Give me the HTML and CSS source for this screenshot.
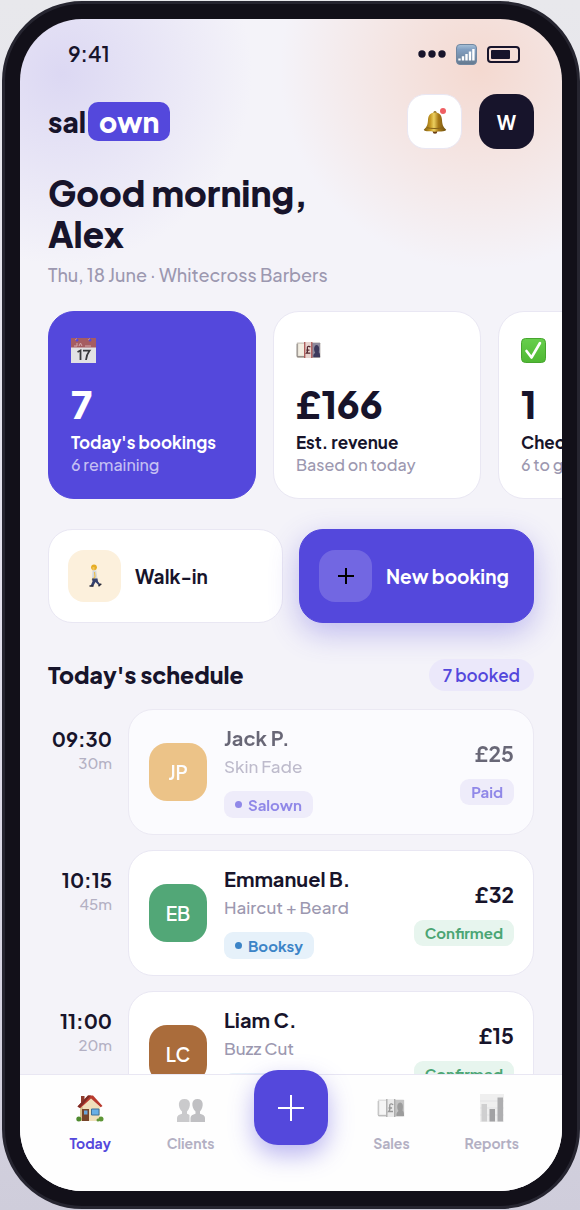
FILE: index.html
```html
<!DOCTYPE html>
<html lang="en">
<head>
<meta charset="utf-8">
<meta name="viewport" content="width=device-width, initial-scale=1">
<title>Salown – Today</title>
<link rel="stylesheet" href="styles.css">
</head>
<body>
<svg class="defs" aria-hidden="true">
  <symbol id="banknote" viewBox="0 0 28 20">
    <path d="M1 1.500h25.500l.8 1v16L26 19H2L.8 17.500z" fill="#c9c3bb"/>
    <path d="M2.500 3h7v13.500h-7z" fill="#f3eee2"/>
    <path d="M1 17.500h26M1.200 3v14" stroke="#827c78" stroke-width="1" fill="none"/>
    <path d="M18 2h9v16h-9z" fill="#8d8a9d"/>
    <path d="M19.500 18c-.5-3 1-4 2-5-2-3-1.500-8 1.500-8.500 3 .2 3.500 4 2.500 8 1 1 1.500 2 1.500 5.500z" fill="#3c395c"/>
    <path d="M9.500 1h8.500v18H9.500z" fill="#e7d4cf"/>
    <path d="M9.800 1v18M17.700 1v18" stroke="#a54646" stroke-width="1.300"/>
    <path d="M16 7c-.8-1.800-3.600-1.300-3.300.8.2 1.600.8 4-.9 5.700H16M11.500 10h3.600" stroke="#54282f" stroke-width="1.400" fill="none"/>
  </symbol>
</svg>
<div class="phone">
  <div class="screen">
    <main class="content">
      <div class="status">
        <span class="clock">9:41</span>
        <div class="status-icons">
          <svg class="dots" viewBox="0 0 28 8" aria-hidden="true"><circle cx="4" cy="4" r="3.700"/><circle cx="14" cy="4" r="3.700"/><circle cx="24" cy="4" r="3.700"/></svg>
          <svg class="signal" viewBox="0 0 21 21" aria-hidden="true">
            <defs><linearGradient id="sig" x1="0" y1="0" x2="0" y2="1"><stop offset="0" stop-color="#a9c2d8"/><stop offset=".25" stop-color="#83a0c2"/><stop offset="1" stop-color="#64798f"/></linearGradient></defs>
            <rect x=".5" y=".5" width="20" height="20" rx="3.500" fill="url(#sig)" stroke="#7187a0"/>
            <path d="M3.500 16.500v-2M7 16.500v-4.200M10.500 16.500v-6.500M14 16.500V7.500M17.400 16.500V5" stroke="#fff" stroke-width="2.400"/>
          </svg>
          <span class="battery"><span class="battery-level"></span></span>
        </div>
      </div>

      <header class="topbar">
        <div class="logo">sal<span class="logo-tag">own</span></div>
        <div class="topbar-actions">
          <button class="square-btn bell" aria-label="Notifications">
            <svg viewBox="0 0 24 24" width="24" height="24" aria-hidden="true">
              <defs><linearGradient id="brass" x1="0" x2="1" y1="0" y2="0"><stop offset="0" stop-color="#7c5a10"/><stop offset=".3" stop-color="#c99c26"/><stop offset=".45" stop-color="#ecd060"/><stop offset=".65" stop-color="#a87a18"/><stop offset="1" stop-color="#6e5010"/></linearGradient></defs>
              <circle cx="12" cy="21.500" r="2.300" fill="#6b3d15"/>
              <circle cx="12" cy="2.600" r="1.600" fill="#8a6a1c"/>
              <path d="M12 2.600c4.700 0 6.700 2.900 7 7.400.3 4 .6 6.500 4.200 9.800.4 1.300-5 1.900-11.200 1.900S.4 21.100.8 19.800C4.400 16.500 4.700 14 5 10c.3-4.500 2.300-7.400 7-7.400z" fill="url(#brass)"/>
              <path d="M4 17.700c4 1.100 12 1.100 16 0" stroke="#86621a" fill="none"/>
            </svg>
            <span class="bell-dot"></span>
          </button>
          <button class="square-btn account" aria-label="Account">W</button>
        </div>
      </header>

      <h1 class="greeting">Good morning,<br>Alex</h1>
      <p class="subtitle">Thu, 18 June · Whitecross Barbers</p>

      <section class="stats" aria-label="Summary">
        <article class="stat stat-primary">
          <div class="stat-icon">
            <svg viewBox="0 0 25 25" width="25" height="25" aria-hidden="true">
              <rect width="25" height="25" fill="#e2e1e4"/><rect width="25" height="9.500" fill="#a55c62"/>
              <path d="M3 8h3V5M8 8l1.500-3L11 8M14 8h6" stroke="#d2a7aa" fill="none"/>
              <circle cx="6" cy="2" r="1.500" fill="#5548dc"/><circle cx="19" cy="2" r="1.500" fill="#5548dc"/>
              <path d="M4 2l2-1.500M17 2l2-1.500" stroke="#c58f95"/>
              <path d="M6.500 14l3-1.500V22M12 12.700h6.500c-2 2.500-3 5-3.500 9.300" stroke="#3a3a3d" stroke-width="1.800" fill="none"/>
            </svg>
          </div>
          <strong class="stat-value">7</strong>
          <span class="stat-label">Today's bookings</span>
          <span class="stat-note">6 remaining</span>
        </article>
        <article class="stat">
          <div class="stat-icon"><svg width="25" height="18" aria-hidden="true"><use href="#banknote"/></svg></div>
          <strong class="stat-value">£166</strong>
          <span class="stat-label">Est. revenue</span>
          <span class="stat-note">Based on today</span>
        </article>
        <article class="stat">
          <div class="stat-icon">
            <svg viewBox="0 0 25 25" width="25" height="25" aria-hidden="true">
              <defs><linearGradient id="ok" x1="0" y1="0" x2="0" y2="1"><stop offset="0" stop-color="#67cf4c"/><stop offset="1" stop-color="#4fb833"/></linearGradient></defs>
              <rect x=".5" y=".5" width="24" height="24" rx="4" fill="url(#ok)" stroke="#47a52f"/>
              <path d="M5.500 13l5 6.500L19 5" stroke="#fff" stroke-width="2.600" fill="none" stroke-linecap="round" stroke-linejoin="round"/>
            </svg>
          </div>
          <strong class="stat-value">1</strong>
          <span class="stat-label">Checked out</span>
          <span class="stat-note">6 to go</span>
        </article>
      </section>

      <div class="actions">
        <button class="action">
          <span class="action-icon action-icon-warm">
            <svg viewBox="0 0 14 24" width="14" height="24" aria-hidden="true">
              <circle cx="6" cy="3.300" r="2.900" fill="#e6ad24"/><path d="M4.500 3h2v3.500h-2z" fill="#f1c45b"/>
              <path d="M4.500 6.500h3.800l1.200 8.500H4z" fill="#d3d8df"/>
              <path d="M6.500 8l.5 5-3 3" stroke="#eebf4a" stroke-width="1.200" fill="none"/>
              <path d="M4 14.500h5.500l.5 3 2.500 3-1 1.500-4-4-2.500 4.500-2.500-.5 2-4.500z" fill="#34406c"/>
              <path d="M1.500 22h4M10.500 22.300l2.800-2.500" stroke="#292a38" stroke-width="1.500"/>
            </svg>
          </span>
          Walk-in
        </button>
        <button class="action action-primary">
          <span class="action-icon">
            <svg viewBox="0 0 16 16" width="16" height="16" aria-hidden="true"><path d="M8 0v16M0 8h16" stroke="#000" stroke-width="2"/></svg>
          </span>
          New booking
        </button>
      </div>

      <div class="section-head">
        <h2 class="section-title">Today's schedule</h2>
        <span class="count">7 booked</span>
      </div>

      <ol class="schedule">
        <li class="slot">
          <div class="when"><time class="when-time">09:30</time><span class="when-length">30m</span></div>
          <article class="booking booking-done">
            <span class="avatar avatar-amber">JP</span>
            <div class="client">
              <h3 class="client-name">Jack P.</h3>
              <p class="service">Skin Fade</p>
              <span class="source source-salown">Salown</span>
            </div>
            <div class="payment"><span class="price">£25</span><span class="badge badge-paid">Paid</span></div>
          </article>
        </li>
        <li class="slot">
          <div class="when"><time class="when-time">10:15</time><span class="when-length">45m</span></div>
          <article class="booking">
            <span class="avatar avatar-green">EB</span>
            <div class="client">
              <h3 class="client-name">Emmanuel B.</h3>
              <p class="service">Haircut + Beard</p>
              <span class="source source-booksy">Booksy</span>
            </div>
            <div class="payment"><span class="price">£32</span><span class="badge badge-ok">Confirmed</span></div>
          </article>
        </li>
        <li class="slot">
          <div class="when"><time class="when-time">11:00</time><span class="when-length">20m</span></div>
          <article class="booking">
            <span class="avatar avatar-brown">LC</span>
            <div class="client">
              <h3 class="client-name">Liam C.</h3>
              <p class="service">Buzz Cut</p>
              <span class="source source-booksy">Booksy</span>
            </div>
            <div class="payment"><span class="price">£15</span><span class="badge badge-ok">Confirmed</span></div>
          </article>
        </li>
      </ol>
    </main>

    <nav class="tabs" aria-label="Main">
      <a class="tab tab-active" href="#today">
        <svg viewBox="0 0 28 28" width="28" height="28" aria-hidden="true">
          <path d="M5 2h3.500v7H5z" fill="#8f3b2c"/>
          <path d="M4 13L14.500 4 24 13v14H4z" fill="#f0dfba"/>
          <path d="M4 13h3v14H4z" fill="#d9c493"/>
          <path d="M1.500 12.500L12 1.500h5L26.500 12l-1.800 1.200L15 4.500 4.500 14z" fill="#b93a2d"/>
          <path d="M1.500 12.500L12 1.500h3L3.500 14z" fill="#7e2c25"/>
          <path d="M6 15h7v12H6z" fill="#77452a"/><path d="M8 16.500h3.500v4H8z" fill="#6aa5d9"/>
          <path d="M15.500 15h7.500v6h-7.500z" fill="#68afe5" stroke="#3e7199"/>
          <circle cx="2.800" cy="25" r="2.500" fill="#4f8a2f"/><circle cx="25" cy="25" r="2.500" fill="#5e9636"/><circle cx="22" cy="26" r="1.500" fill="#5e9636"/>
        </svg>
        Today
      </a>
      <a class="tab" href="#clients">
        <svg viewBox="0 0 28 28" width="28" height="28" aria-hidden="true">
          <path d="M0 28v-4c0-2.500 2-3.200 5-4.200v-2.300C.5 13 .5 5 7.500 5S14 13 10 17.500v2.300c1 .4 1.600.7 2.500 1.200V28z" fill="#cacacc"/>
          <path d="M13.500 28v-4c0-2.500 2-3.200 5-4.200v-2.300C14 13 14 5 20.500 5S27 13 23 17.500v2.300c3 1 5 1.700 5 4.200v4z" fill="#c0c0c3"/>
        </svg>
        Clients
      </a>
      <button class="fab" aria-label="Add">
        <svg viewBox="0 0 26 26" width="26" height="26" aria-hidden="true"><path d="M13 0v26M0 13h26" stroke="#fff" stroke-width="2"/></svg>
      </button>
      <a class="tab" href="#sales">
        <svg class="muted-icon" width="28" height="28" aria-hidden="true"><use href="#banknote"/></svg>
        Sales
      </a>
      <a class="tab" href="#reports">
        <svg viewBox="0 0 28 28" width="28" height="28" aria-hidden="true">
          <path d="M2 0h24v28H2z" fill="#efefef"/><path d="M2 7h24M2 14h24M2 21h24" stroke="#e3e3e5"/>
          <path d="M3.500 10H9v17.500H3.500z" fill="#cfcfd0"/><path d="M11.500 15H17v12.500h-5.500z" fill="#a2a2a4"/><path d="M19.500 3.500H25v24h-5.500z" fill="#aeaeb0"/>
        </svg>
        Reports
      </a>
    </nav>
  </div>
</div>
</body>
</html>
```
FILE: styles.css
```css
:root {
  --ink: #17142b;
  --muted: #9c98b0;
  --faint: #b3b0c3;
  --accent: #5448dc;
  --tint: #ebe8fa;
  --line: #e9e7f3;
  --page: #f4f3f9;
}

* { box-sizing: border-box; }

body {
  margin: 0;
  padding: 1px 0 1px 2px;
  background: linear-gradient(180deg, #e8e8ec 0%, #e2e0ec 50%, #cfcddb 100%);
  color: var(--ink);
  font-family: "Plus Jakarta Sans", Inter, sans-serif;
}

h1, h2, h3, p, ol { margin: 0; padding: 0; }
button { border: 0; padding: 0; font: inherit; color: inherit; cursor: pointer; }
svg { display: block; }
.defs { display: none; }

.phone {
  height: calc(100vh - 2px);
  padding: 15px;
  border: 3px solid #262530;
  border-radius: 80px;
  background: #121019;
}

.screen {
  display: flex;
  flex-direction: column;
  height: 100%;
  overflow: hidden;
  border-radius: 62px;
  background:
    radial-gradient(circle at 42px 55px, #dcd8f3 0, #dcd8f300 190px),
    radial-gradient(circle at calc(100% - 82px) 50px, #f4d9d0 0, #f4d9d000 200px),
    var(--page);
}

.content {
  flex: 1;
  min-height: 0;
  padding: 0 28px;
  overflow: hidden auto;
  scrollbar-width: none;
}

/* Status bar */
.status {
  display: flex;
  align-items: center;
  justify-content: space-between;
  padding: 20px 14px 25px 20px;
}
.clock { font-size: 21px; line-height: 30px; font-weight: 600; }
.status-icons { display: flex; align-items: center; gap: 10px; }
.dots { width: 28px; height: 8px; fill: var(--ink); }
.signal { width: 21px; height: 21px; }
.battery {
  width: 33px;
  height: 17px;
  padding: 2px;
  border: 2px solid var(--ink);
  border-radius: 4px;
}
.battery-level { display: block; width: 19px; height: 9px; border-radius: 1px; background: var(--ink); }

/* Top bar */
.topbar { display: flex; align-items: center; justify-content: space-between; }
.logo { display: flex; align-items: center; gap: 2px; font-size: 28px; line-height: 39px; font-weight: 800; }
.logo-tag { padding: 0 11px; border-radius: 10px; background: var(--accent); color: #fff; }
.topbar-actions { display: flex; gap: 17px; }
.square-btn {
  display: grid;
  place-items: center;
  width: 55px;
  height: 55px;
  border-radius: 18px;
  font-size: 19px;
  font-weight: 700;
}
.bell { position: relative; border: 1px solid var(--line); background: #fff; }
.bell-dot { position: absolute; top: 13px; right: 15px; width: 6px; height: 6px; border-radius: 3px; background: #ef5f63; }
.account { background: var(--ink); color: #fff; }

.greeting { margin-top: 24px; font-size: 35px; line-height: 41px; font-weight: 800; }
.subtitle { margin-top: 8px; font-size: 18px; line-height: 24px; font-weight: 500; color: var(--muted); }

/* Summary cards */
.stats {
  display: flex;
  gap: 17px;
  margin: 24px -28px 0 0;
  overflow: auto hidden;
  scrollbar-width: none;
}
.stat {
  display: flex;
  flex: 0 0 208px;
  flex-direction: column;
  padding: 22px;
  border: 1px solid var(--line);
  border-radius: 26px;
  background: #fff;
}
.stat-icon { display: flex; align-items: center; height: 32px; }
.stat-value { margin-top: 15px; font-size: 38px; line-height: 46px; font-weight: 800; }
.stat-label { margin-top: 3px; font-size: 17px; line-height: 24px; font-weight: 700; white-space: nowrap; }
.stat-note { font-size: 16px; line-height: 22px; font-weight: 500; color: var(--muted); }
.stat-primary { border-color: var(--accent); background: var(--accent); color: #fff; }
.stat-primary .stat-note { color: #c5c0f3; }

/* Quick actions */
.actions { display: grid; grid-template-columns: repeat(2, minmax(0, 1fr)); gap: 16px; margin-top: 30px; }
.action {
  display: flex;
  align-items: center;
  gap: 14px;
  height: 94px;
  padding: 0 19px;
  border: 1px solid var(--line);
  border-radius: 24px;
  background: #fff;
  font-size: 19px;
  font-weight: 700;
  white-space: nowrap;
}
.action-primary {
  border-color: var(--accent);
  background: var(--accent);
  color: #fff;
  box-shadow: 0 10px 30px #5448dc55;
}
.action-icon {
  display: grid;
  place-items: center;
  flex: none;
  width: 53px;
  height: 52px;
  border-radius: 16px;
  background: #7267e2;
}
.action-icon-warm { background: #fcf0dc; }

/* Schedule */
.section-head { display: flex; align-items: center; justify-content: space-between; margin-top: 36px; }
.section-title { font-size: 23px; line-height: 32px; font-weight: 800; }
.count {
  padding: 0 14px;
  border-radius: 16px;
  background: var(--tint);
  color: var(--accent);
  font-size: 17px;
  line-height: 32px;
  font-weight: 600;
}
.schedule { display: grid; gap: 15px; margin-top: 18px; list-style: none; }
.slot { display: grid; grid-template-columns: 64px 1fr; gap: 16px; }
.when { display: flex; flex-direction: column; padding-top: 17px; text-align: right; }
.when-time { font-size: 20px; line-height: 26px; font-weight: 700; }
.when-length { font-size: 15px; line-height: 22px; font-weight: 500; color: var(--faint); }
.booking {
  display: flex;
  align-items: center;
  gap: 17px;
  padding: 14px 19px 14px 20px;
  border: 1px solid var(--line);
  border-radius: 25px;
  background: #fff;
}
.booking-done { border-color: #ebe9f3; background: #fbfbfe; }
.booking-done > * { opacity: .64; }
.avatar {
  display: grid;
  place-items: center;
  flex: none;
  width: 58px;
  height: 58px;
  border-radius: 18px;
  color: #fff;
  font-size: 19px;
  font-weight: 600;
}
.avatar-amber { background: #e5a547; }
.avatar-green { background: #52a777; }
.avatar-brown { background: #aa6c3b; }
.client { flex: 1; min-width: 0; padding-bottom: 2px; }
.client-name { font-size: 20px; line-height: 28px; font-weight: 700; }
.service { margin-bottom: 11px; font-size: 17px; line-height: 28px; font-weight: 500; color: var(--muted); }
.source {
  display: flex;
  align-items: center;
  gap: 6px;
  width: fit-content;
  padding: 0 11px;
  border-radius: 9px;
  font-size: 15px;
  line-height: 27px;
  font-weight: 700;
}
.source::before { content: ""; width: 7px; height: 7px; border-radius: 50%; background: currentColor; }
.source-salown { background: #e8e4f8; color: var(--accent); }
.source-booksy { background: #e6f1fa; color: #3c84c7; }
.payment { display: flex; flex-direction: column; align-items: flex-end; gap: 11px; }
.price { font-size: 21px; line-height: 28px; font-weight: 700; }
.badge { padding: 0 11px; border-radius: 9px; font-size: 15px; line-height: 26px; font-weight: 700; }
.badge-paid { background: #e8e4f8; color: var(--accent); }
.badge-ok { background: #e7f5ee; color: #4ba574; }

/* Bottom navigation */
.tabs {
  display: grid;
  grid-template-columns: repeat(5, 1fr);
  height: 117px;
  padding: 0 20px;
  border-top: 1px solid var(--line);
  background: #fefefe;
}
.tab {
  display: flex;
  flex-direction: column;
  align-items: center;
  gap: 10px;
  padding-top: 19px;
  color: var(--faint);
  font-size: 14px;
  line-height: 22px;
  font-weight: 700;
  text-decoration: none;
}
.tab-active { color: var(--accent); }
.muted-icon { filter: grayscale(1); opacity: .5; }
.fab {
  display: grid;
  place-items: center;
  justify-self: center;
  width: 74px;
  height: 75px;
  margin-top: -5px;
  border-radius: 24px;
  background: var(--accent);
  box-shadow: 0 10px 24px #5448dc66;
}
```
